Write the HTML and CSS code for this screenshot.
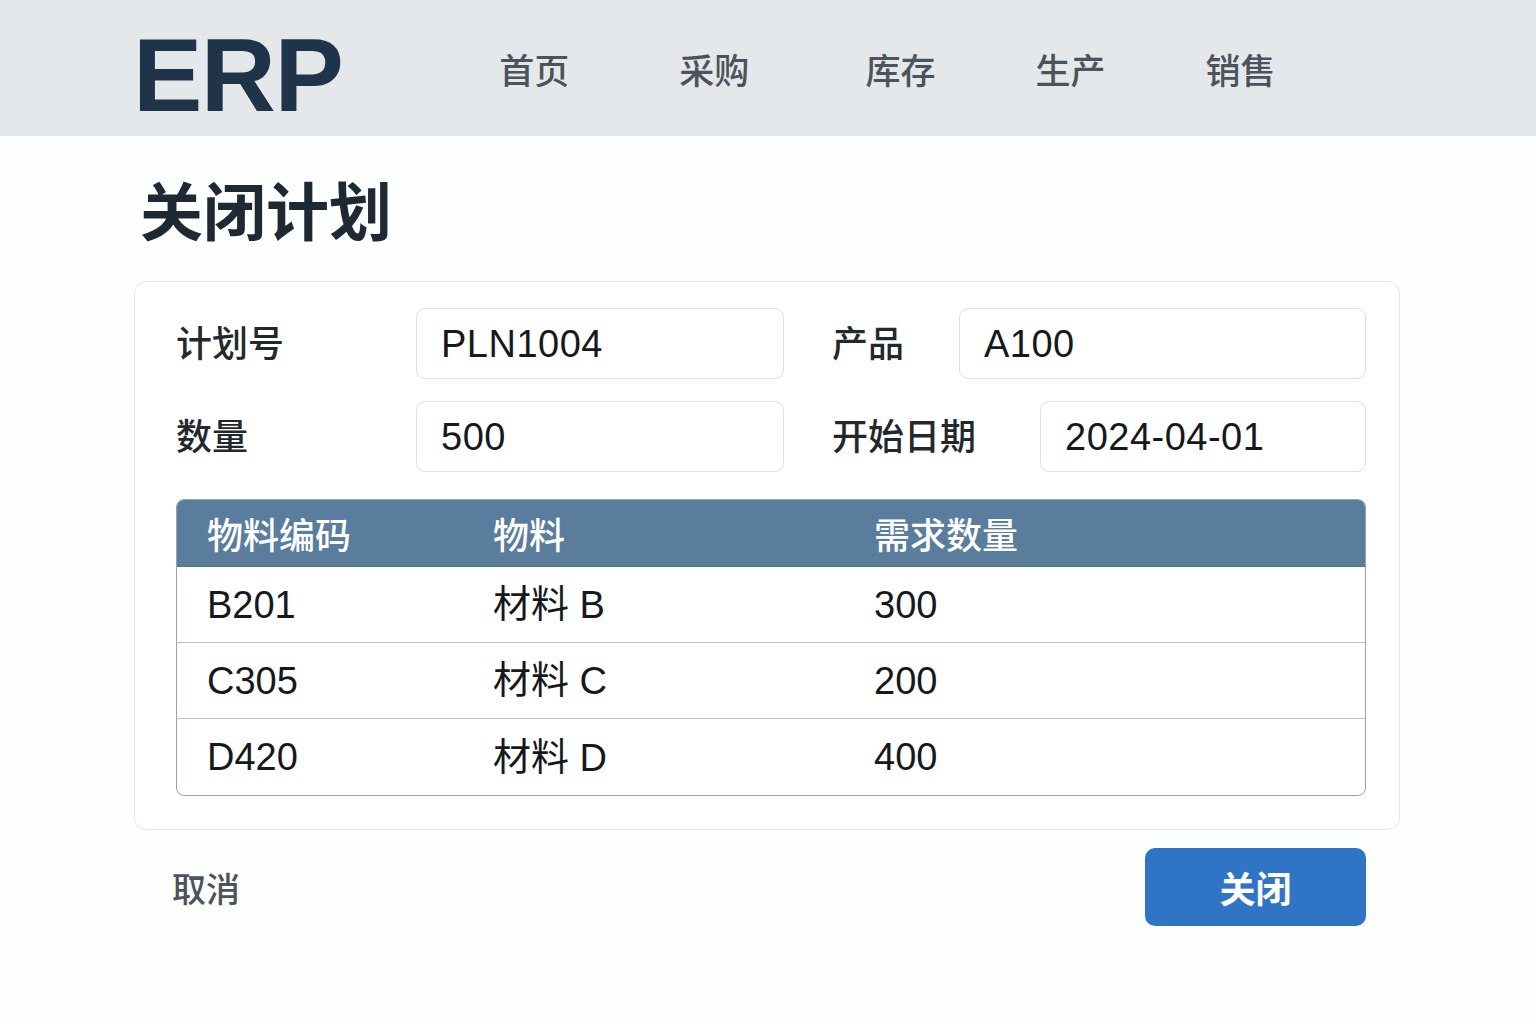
FILE: index.html
```html
<!DOCTYPE html>
<html lang="zh-CN">
<head>
<meta charset="utf-8">
<title>ERP - 关闭计划</title>
<link rel="stylesheet" href="styles.css">
</head>
<body>
<header class="topbar">
  <div class="logo">ERP</div>
  <nav class="nav">
    <a class="nav-item">首页</a>
    <a class="nav-item">采购</a>
    <a class="nav-item">库存</a>
    <a class="nav-item">生产</a>
    <a class="nav-item">销售</a>
  </nav>
</header>
<main class="main">
  <h1 class="title">关闭计划</h1>
  <section class="card">
    <div class="form-row">
      <label class="label label-left">计划号</label>
      <div class="input input-left">PLN1004</div>
      <label class="label label-right label-short">产品</label>
      <div class="input input-right">A100</div>
    </div>
    <div class="form-row">
      <label class="label label-left">数量</label>
      <div class="input input-left">500</div>
      <label class="label label-right label-long">开始日期</label>
      <div class="input input-right">2024-04-01</div>
    </div>
    <div class="table">
      <div class="trow thead">
        <div class="cell">物料编码</div>
        <div class="cell">物料</div>
        <div class="cell">需求数量</div>
      </div>
      <div class="trow">
        <div class="cell">B201</div>
        <div class="cell"><span class="cjk">材料</span> B</div>
        <div class="cell">300</div>
      </div>
      <div class="trow">
        <div class="cell">C305</div>
        <div class="cell"><span class="cjk">材料</span> C</div>
        <div class="cell">200</div>
      </div>
      <div class="trow last">
        <div class="cell">D420</div>
        <div class="cell"><span class="cjk">材料</span> D</div>
        <div class="cell">400</div>
      </div>
    </div>
  </section>
  <div class="actions">
    <a class="cancel">取消</a>
    <button class="btn-primary">关闭</button>
  </div>
</main>
</body>
</html>
```

FILE: styles.css
```css
* { box-sizing: border-box; }
html, body {
  margin: 0;
  padding: 0;
  background: #fdfefe;
  font-family: "Liberation Sans", "Noto Sans CJK SC", sans-serif;
  color: #1b1f24;
}
.topbar {
  height: 136px;
  background: #e5e8eb;
  display: flex;
  align-items: center;
  padding-left: 133px;
}
.logo {
  font-family: "Liberation Sans", sans-serif;
  font-weight: 700;
  font-size: 104px;
  line-height: 1;
  color: #1f3349;
  letter-spacing: -1.5px;
  margin-top: 14px;
}
.nav {
  display: flex;
  margin-left: 157px;
}
.nav-item {
  font-family: "Noto Sans CJK SC", sans-serif;
  font-size: 35px;
  font-weight: 500;
  color: #4b535b;
  line-height: 1;
  margin-right: 110px;
}
.nav-item:nth-child(2) { margin-right: 116px; }
.nav-item:nth-child(3) { margin-right: 100px; }
.nav-item:nth-child(4) { margin-right: 100px; }
.main {
  padding-left: 134px;
  width: 1400px;
}
.title {
  margin: 34px 0 0 6px;
  font-family: "Noto Sans CJK SC", sans-serif;
  font-size: 63px;
  font-weight: 700;
  line-height: 1.2;
  color: #1e2933;
  height: 111px;
}
.card {
  border: 1.5px solid #e3e6e9;
  border-radius: 12px;
  background: #ffffff;
  padding: 26px 33px 33px 41px;
  display: flex;
  flex-direction: column;
}
.form-row {
  display: flex;
  align-items: center;
  height: 71px;
  margin-bottom: 22px;
}
.label {
  font-family: "Noto Sans CJK SC", sans-serif;
  font-size: 36px;
  font-weight: 500;
  color: #23282d;
  line-height: 1;
  margin-bottom: 5px;
}
.label-left { width: 240px; }
.label-right { margin-left: 48px; }
.label-short { width: 127px; }
.label-long { width: 208px; }
.input {
  height: 71px;
  border: 1.5px solid #dcdfe3;
  border-radius: 9px;
  background: #ffffff;
  display: flex;
  align-items: center;
  padding-left: 24px;
  font-size: 38px;
  color: #15191d;
  letter-spacing: 0.5px;
  padding-top: 2px;
}
.input-left { width: 368px; }
.input-right { flex: 1; }
.table {
  margin-top: 5px;
  border: 1.5px solid #9aa3ab;
  border-radius: 8px;
  overflow: hidden;
}
.trow {
  display: grid;
  grid-template-columns: 286px 381px 1fr;
  padding-left: 30px;
  height: 76px;
  align-items: center;
  border-bottom: 1.5px solid #b9bfc5;
  font-size: 38px;
  color: #15191d;
}
.cell { line-height: 1; }
.cjk {
  vertical-align: 1px;
}
.trow.last { border-bottom: none; }
.thead {
  height: 67px;
  background: #5a7d9d;
  border-bottom: 1.5px solid #4f7090;
}
.thead .cell {
  font-family: "Noto Sans CJK SC", sans-serif;
  font-weight: 500;
  font-size: 36px;
  color: #ffffff;
}
.actions {
  display: flex;
  justify-content: space-between;
  align-items: center;
  margin-top: 18px;
  padding-left: 38px;
  padding-right: 34px;
}
.cancel {
  font-family: "Noto Sans CJK SC", sans-serif;
  font-size: 34px;
  font-weight: 500;
  color: #4b535b;
}
.btn-primary {
  width: 221px;
  height: 78px;
  border: none;
  border-radius: 10px;
  background: #2f74c5;
  color: #ffffff;
  font-family: "Noto Sans CJK SC", sans-serif;
  font-size: 36px;
  font-weight: 700;
  cursor: pointer;
}
```
